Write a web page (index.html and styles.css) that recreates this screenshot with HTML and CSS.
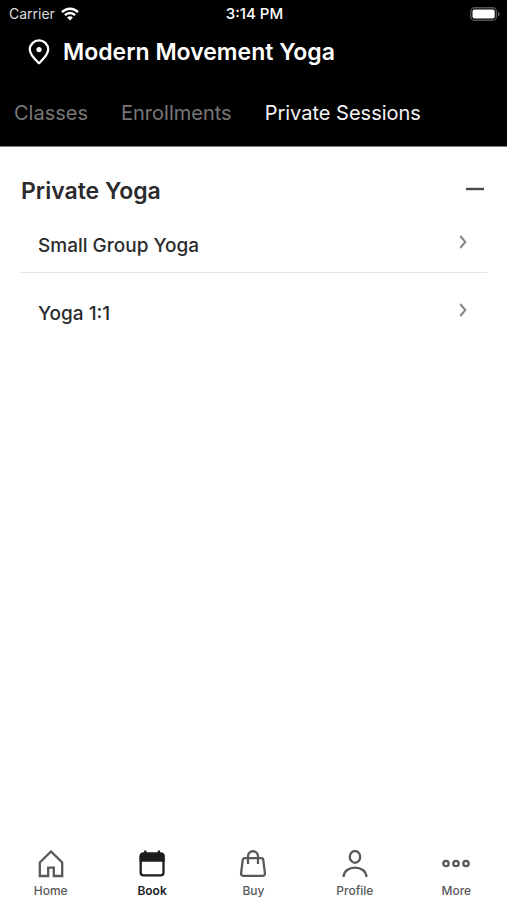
FILE: index.html
```html
<!DOCTYPE html>
<html lang="en">
<head>
<meta charset="utf-8">
<meta name="viewport" content="width=device-width, initial-scale=1">
<title>Modern Movement Yoga</title>
<link rel="stylesheet" href="styles.css">
</head>
<body>
<header class="header">
  <div class="status">
    <div class="carrier">
      <span>Carrier</span>
      <svg width="18" height="14" viewBox="0 0 18 14" fill="none" stroke="#fff" stroke-width="2.5">
        <path d="M1 5.200C5.500.5 12.500.5 17 5.200M3.900 8.100c2.900-2.900 7.300-2.900 10.200 0"/>
        <path d="M9 13.500L6.100 10.500c1.600-1.600 4.200-1.600 5.800 0z" fill="#fff" stroke="none"/>
      </svg>
    </div>
    <time class="clock">3:14 PM</time>
    <svg class="battery" width="30" height="14" viewBox="0 0 30 14">
      <rect x=".8" y=".8" width="25.600" height="12.400" rx="3.800" fill="none" stroke="#555" stroke-width="1.400"/>
      <rect x="2.500" y="2.500" width="22.200" height="9" rx="2" fill="#fff"/>
      <path d="M28 4.700c2.200.8 2.200 3.800 0 4.600z" fill="#666"/>
    </svg>
  </div>
  <div class="location">
    <svg width="22" height="26" viewBox="0 0 22 26" fill="none" stroke="#fff" stroke-width="2.300">
      <path d="M11 24.300C8.200 21.500 1.800 16 1.800 10.600a9.200 9.200 0 0 1 18.400 0C20.200 16 13.800 21.500 11 24.300z" stroke-linejoin="round"/>
      <circle cx="11" cy="10.600" r="2.600" fill="#fff" stroke="none"/>
    </svg>
    <h1 class="title">Modern Movement Yoga</h1>
  </div>
  <nav class="tabs" aria-label="Booking types">
    <a class="tab" href="#classes">Classes</a>
    <a class="tab" href="#enrollments">Enrollments</a>
    <a class="tab tab-active" href="#private" aria-current="page">Private Sessions</a>
  </nav>
</header>
<main class="content">
  <div class="group">
    <h2 class="group-title">Private Yoga</h2>
    <button class="toggle" type="button" aria-label="Collapse Private Yoga">
      <svg width="18" height="4" viewBox="0 0 18 4"><path d="M0 2h18" stroke="#4a4a4c" stroke-width="2.400"/></svg>
    </button>
  </div>
  <ul class="list">
    <li class="item"><a class="row" href="#small-group"><span>Small Group Yoga</span>
      <svg class="chevron" width="8" height="14" viewBox="0 0 8 14"><path d="M1.300 1l5 6-5 6"/></svg></a></li>
    <li class="item"><a class="row" href="#yoga-1-1"><span>Yoga 1:1</span>
      <svg class="chevron" width="8" height="14" viewBox="0 0 8 14"><path d="M1.300 1l5 6-5 6"/></svg></a></li>
  </ul>
</main>
<nav class="bottom" aria-label="Main">
  <a class="link" href="#home">
    <svg class="icon" viewBox="0 0 28 28"><path d="M14 1.500L2.800 12.400V26h8.400V17.600h5.600V26h8.400V12.400z"/></svg>
    <span>Home</span></a>
  <a class="link link-active" href="#book" aria-current="page">
    <svg class="icon" viewBox="0 0 28 28"><rect x="2.700" y="3.700" width="22.800" height="21.600" rx="2.800"/><path d="M2.700 10.500v-4q0-2.800 2.800-2.800h17.200q2.800 0 2.800 2.800v4z" fill="currentColor"/><path d="M7.300 4V.4M20.900 4V.4"/></svg>
    <span>Book</span></a>
  <a class="link" href="#buy">
    <svg class="icon" viewBox="0 0 28 28"><path d="M5.600 8.100h16.800q1.600 0 1.800 1.600l1.700 13.200q.3 3-2.700 3H4.800q-3 0-2.700-3L3.800 9.700q.2-1.600 1.800-1.600zM9 14V6.500C9-.5 19-.5 19 6.500V14"/></svg>
    <span>Buy</span></a>
  <a class="link" href="#profile">
    <svg class="icon" viewBox="0 0 28 28"><ellipse cx="14" cy="6.900" rx="5.200" ry="5.900"/><path d="M2.600 27C2.800 14.500 25.200 14.500 25.400 27"/></svg>
    <span>Profile</span></a>
  <a class="link" href="#more">
    <svg class="icon" viewBox="0 0 28 28"><circle cx="4" cy="13.500" r="2.700"/><circle cx="14" cy="13.500" r="2.700"/><circle cx="24" cy="13.500" r="2.700"/></svg>
    <span>More</span></a>
</nav>
</body>
</html>
```
FILE: styles.css
```css
* { box-sizing: border-box; }
body {
  margin: 0;
  min-height: 100vh;
  display: flex;
  flex-direction: column;
  background: #fff;
  color: #2b2b2d;
  font-family: Inter, "Liberation Sans", sans-serif;
}
a { color: inherit; text-decoration: none; }
h1, h2, ul { margin: 0; padding: 0; }
svg { display: block; flex: none; }

.header { background: #000; color: #fff; border-bottom: 1px solid #777; }
.status {
  display: grid;
  grid-template-columns: 1fr auto 1fr;
  align-items: center;
  height: 27px;
  padding: 0 7px 0 9px;
  font-size: 14px;
}
.carrier { display: flex; align-items: center; gap: 6px; color: #ddd; }
.clock { font-size: 15px; font-weight: 500; }
.battery { justify-self: end; }
.location {
  display: flex;
  align-items: center;
  gap: 13px;
  height: 50px;
  padding-left: 28px;
}
.title { font-size: 23px; line-height: 32px; font-weight: 600; }
.tabs {
  display: flex;
  align-items: center;
  gap: 33px;
  height: 69px;
  padding: 3px 14px 0;
  font-size: 20px;
  white-space: nowrap;
}
.tab { color: #777; }
.tab-active { color: #f4f4f4; }

.content { flex: 1; padding: 20px 20px 0; }
.group { display: flex; align-items: center; justify-content: space-between; height: 48px; }
.group-title { padding-left: 1px; font-size: 23px; line-height: 32px; font-weight: 600; }
.toggle { padding: 8px 3px 12px; border: 0; background: none; cursor: pointer; }
.list { list-style: none; }
.row {
  display: flex;
  align-items: center;
  justify-content: space-between;
  height: 77px;
  padding: 4px 20px 0 18px;
  font-size: 19px;
  font-weight: 500;
}
.item:first-child { border-bottom: 1px solid #e4e4e6; }
.item:first-child .row { height: 57px; }
.chevron { margin-bottom: 8px; fill: none; stroke: #858587; stroke-width: 2; }

.bottom { display: grid; grid-template-columns: repeat(5, 1fr); height: 60px; color: #58595c; }
.link {
  display: flex;
  flex-direction: column;
  align-items: center;
  gap: 5px;
  padding-top: 10px;
  font-size: 12px;
  line-height: 16px;
  font-weight: 500;
}
.link-active { color: #1d1d1f; font-weight: 600; }
.icon { width: 28px; height: 28px; fill: none; stroke: currentColor; stroke-width: 2.3; }
```
